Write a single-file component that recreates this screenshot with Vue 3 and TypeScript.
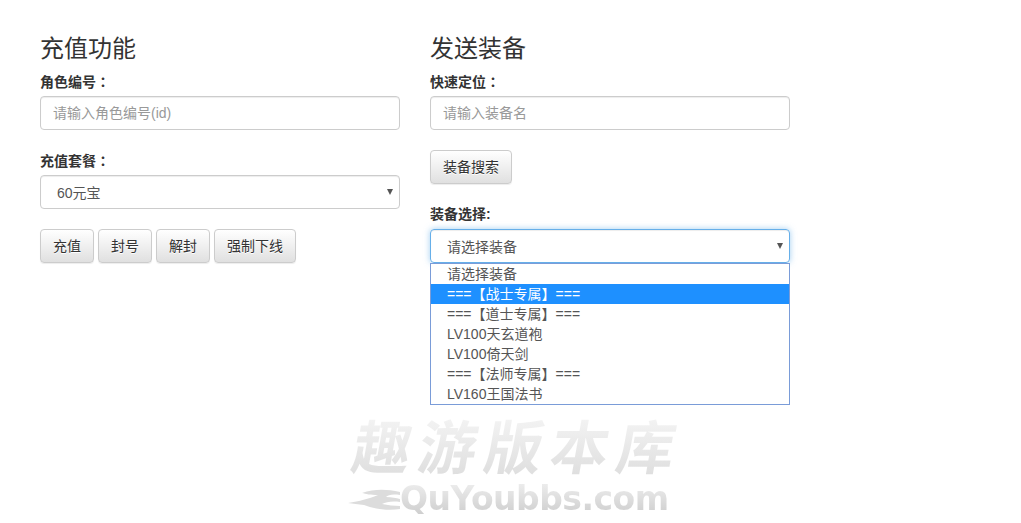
<script setup lang="ts">
const packageOption = '60元宝'
const buttons = ['充值', '封号', '解封', '强制下线']
const equipOptions = [
  '请选择装备',
  '===【战士专属】===',
  '===【道士专属】===',
  'LV100天玄道袍',
  'LV100倚天剑',
  '===【法师专属】===',
  'LV160王国法书'
]
const highlighted = 1
</script>

<template>
  <div class="page">
    <section class="col">
      <h3>充值功能</h3>
      <div class="form-group">
        <label>角色编号<span class="colon">：</span></label>
        <input class="form-control" type="text" placeholder="请输入角色编号(id)" />
      </div>
      <div class="form-group">
        <label>充值套餐<span class="colon">：</span></label>
        <div class="select">{{ packageOption }}<i class="caret"></i></div>
      </div>
      <div class="btn-row">
        <button v-for="b in buttons" :key="b" class="btn">{{ b }}</button>
      </div>
    </section>

    <section class="col">
      <h3>发送装备</h3>
      <div class="form-group">
        <label>快速定位<span class="colon">：</span></label>
        <input class="form-control" type="text" placeholder="请输入装备名" />
      </div>
      <div class="form-group">
        <button class="btn">装备搜索</button>
      </div>
      <div class="form-group">
        <label>装备选择:</label>
        <div class="select-wrap">
          <div class="select select--open">请选择装备<i class="caret"></i></div>
          <ul class="dropdown">
            <li
              v-for="(opt, i) in equipOptions"
              :key="opt"
              :class="{ active: i === highlighted }"
            >
              {{ opt }}
            </li>
          </ul>
        </div>
      </div>
    </section>

    <!-- 水印 -->
    <div class="watermark">
      <div class="wm-cn">趣游版本库</div>
      <div class="wm-bottom">
        <svg class="wm-swoosh" width="52" height="26" viewBox="0 0 52 26">
          <path d="M0 17C12 15 20 13 30 9C22 9 18 8 14 7C26 3 38 3 52 6V9C44 8 40 9 38 11C44 11 48 12 52 13V16C44 15 38 16 34 18C40 19 46 20 52 20V23C40 25 26 23 16 19C10 18 5 18 0 17Z" fill="#dcdcdc" />
        </svg>
        <div class="wm-en">QuYoubbs.com</div>
      </div>
    </div>
  </div>
</template>

<style>
html,
body {
  margin: 0;
  background: #fff;
}
</style>

<style scoped>
.page {
  position: relative;
  display: flex;
  gap: 30px;
  height: 523px;
  padding: 35px 0 0 40px;
  box-sizing: border-box;
  overflow: hidden;
  font-family: "Liberation Sans", "Noto Sans CJK SC", sans-serif;
  font-size: 14px;
  line-height: 20px;
  color: #333;
}

.col {
  width: 360px;
}

h3 {
  margin: 0 0 8px;
  font-size: 24px;
  font-weight: 400;
  line-height: 28px;
}

.form-group {
  margin-bottom: 20px;
}

label {
  display: block;
  height: 20px;
  margin-bottom: 5px;
  font-weight: 700;
}

/* 全角冒号居中 */
.colon {
  font-family: "Noto Sans CJK TC", sans-serif;
}

.form-control {
  display: block;
  width: 100%;
  height: 34px;
  padding: 6px 12px;
  box-sizing: border-box;
  border: 1px solid #ccc;
  border-radius: 4px;
  box-shadow: inset 0 1px 1px rgba(0, 0, 0, 0.075);
  font: inherit;
  color: #555;
  outline: none;
}

.form-control::placeholder {
  color: #999;
  opacity: 1;
}

.select {
  position: relative;
  height: 34px;
  padding: 7px 16px 5px;
  box-sizing: border-box;
  border: 1px solid #ccc;
  border-radius: 4px;
  box-shadow: inset 0 1px 1px rgba(0, 0, 0, 0.075);
  color: #555;
}

.select--open {
  border-color: #66afe9;
  box-shadow:
    inset 0 1px 1px rgba(0, 0, 0, 0.075),
    0 0 6px rgba(102, 175, 233, 0.6);
}

.caret {
  position: absolute;
  top: 13px;
  right: 6px;
  width: 0;
  height: 0;
  border-top: 6px solid #555;
  border-left: 3px solid transparent;
  border-right: 3px solid transparent;
}

.btn-row {
  display: flex;
  gap: 4px;
}

.btn {
  display: block;
  height: 34px;
  padding: 6px 12px;
  box-sizing: border-box;
  border: 1px solid #ccc;
  border-radius: 4px;
  background: linear-gradient(to bottom, #fff 0%, #e0e0e0 100%);
  box-shadow:
    inset 0 1px 0 rgba(255, 255, 255, 0.15),
    0 1px 1px rgba(0, 0, 0, 0.075);
  font: inherit;
  color: #333;
  text-shadow: 0 1px 0 #fff;
}

.select-wrap {
  position: relative;
}

/* 展开的下拉列表 */
.dropdown {
  position: absolute;
  top: 34px;
  left: 0;
  right: 0;
  margin: 0;
  padding: 0;
  list-style: none;
  background: #fff;
  border: 1px solid #7a9cd8;
  color: #555;
}

.dropdown li {
  height: 20px;
  padding: 0 16px;
  line-height: 20px;
}

.dropdown li.active {
  background: #1e90ff;
  color: #fff;
}

.watermark {
  position: absolute;
  left: 348px;
  top: 416px;
  width: 335px;
  pointer-events: none;
  user-select: none;
}

.wm-cn,
.wm-en {
  background-clip: text;
  -webkit-background-clip: text;
  color: transparent;
  white-space: nowrap;
}

.wm-cn {
  padding-left: 5px;
  background-image: linear-gradient(to bottom, #f4f4f4 0%, #dcdcdc 100%);
  font-size: 58px;
  font-weight: 700;
  line-height: 66px;
  letter-spacing: 8px;
  transform: skewX(-10deg);
}

.wm-bottom {
  display: flex;
  align-items: center;
  margin-top: 2px;
}

.wm-swoosh {
  flex: 0 0 auto;
}

.wm-en {
  background-image: linear-gradient(to bottom, #ececec 0%, #cfcfcf 100%);
  font-family: "DejaVu Sans", sans-serif;
  font-size: 33px;
  font-weight: 700;
  line-height: 30px;
  letter-spacing: -0.5px;
}
</style>
